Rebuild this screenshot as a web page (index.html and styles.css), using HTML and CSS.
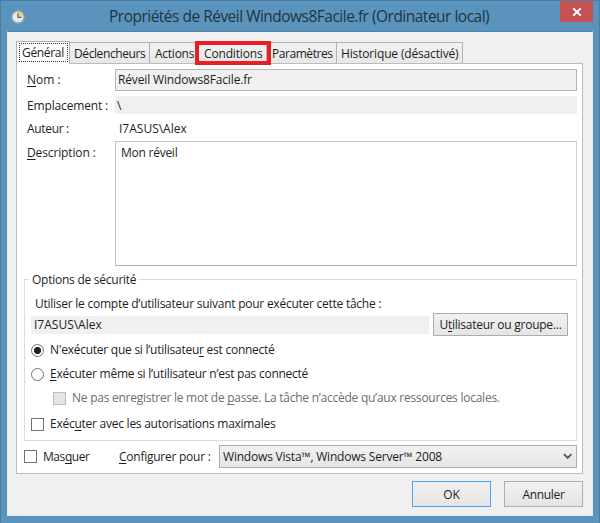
FILE: index.html
```
<!DOCTYPE html>
<html lang="fr">
<head>
<meta charset="utf-8">
<title>Propriétés de Réveil Windows8Facile.fr (Ordinateur local)</title>
<link rel="stylesheet" href="styles.css">
</head>
<body>
<div class="window">
  <header class="titlebar">
    <svg class="clock" width="14" height="14" viewBox="0 0 14 14">
      <circle cx="7" cy="7" r="6" fill="#e4e9eb" stroke="#a3a8aa" stroke-width="1.3"/>
      <path d="M7 1.5A5.5 5.5 0 0 1 12.5 7H7Z" fill="#f3cf86"/>
      <path d="M7 3v4.4h3.4" fill="none" stroke="#59666e" stroke-width="1.2"/>
    </svg>
    <h1 class="title">Propriétés de Réveil Windows8Facile.fr (Ordinateur local)</h1>
    <div class="close">
      <svg width="10" height="8" viewBox="0 0 10 8"><path d="M1.2 .3 8.8 7.7M8.8 .3 1.2 7.7" stroke="#fff" stroke-width="2"/></svg>
    </div>
  </header>
  <main class="client">
    <nav class="tabs">
      <div class="tab active"><span class="focus ls-tight">Général</span></div>
      <div class="tab t-trigger">Déclencheurs</div>
      <div class="tab t-actions">Actions</div>
      <div class="tab t-conditions">Conditions<i class="highlight"></i></div>
      <div class="tab t-settings">Paramètres</div>
      <div class="tab t-history">Historique (désactivé)</div>
    </nav>
    <section class="panel">
      <div class="row name"><label class="ls-none"><u>N</u>om :</label><div class="field boxed ls-wide">Réveil Windows8Facile.fr</div></div>
      <div class="row place"><label class="ls-wide">Emplacement :</label><div class="field">\</div></div>
      <div class="row author"><label class="ls-tight">Auteur :</label><div class="plain ls-none">I7ASUS\Alex</div></div>
      <div class="row desc"><label class="ls-desc"><u>D</u>escription :</label><div class="textarea">Mon réveil</div></div>
      <section class="group">
        <h2 class="legend">Options de sécurité</h2>
        <p class="intro">Utiliser le compte d’utilisateur suivant pour exécuter cette tâche :</p>
        <div class="account"><div class="user ls-none">I7ASUS\Alex</div><div class="button pick">U<u>t</u>ilisateur ou groupe...</div></div>
        <div class="option first"><i class="radio on"></i><span>N'exécuter que si l’utilisateu<u>r</u> est connecté</span></div>
        <div class="option second"><i class="radio"></i><span><u>E</u>xécuter même si l’utilisateur n’est pas connecté</span></div>
        <div class="option disabled"><i class="check"></i><span>Ne pas enregistrer le mot de <u>p</u>asse. La tâche n’accède qu’aux ressources locales.</span></div>
        <div class="option max"><i class="check"></i><span>Exéc<u>u</u>ter avec les autorisations maximales</span></div>
      </section>
      <div class="config">
        <i class="check"></i><span class="hide ls-hide">Mas<u>q</u>uer</span>
        <label class="for"><u>C</u>onfigurer pour :</label>
        <div class="select"><span>Windows Vista™, Windows Server™ 2008</span>
          <svg width="10" height="7" viewBox="0 0 10 7"><path d="M1 1.2 4.7 5 8.4 1.2" fill="none" stroke="#555" stroke-width="1.8"/></svg>
        </div>
      </div>
    </section>
    <footer class="actions">
      <div class="button ok">OK</div>
      <div class="button cancel ls-tight">Annuler</div>
    </footer>
  </main>
</div>
</body>
</html>
```
FILE: styles.css
```
* { box-sizing: border-box; }
body { margin: 0; font: 12px/16px "Open Sans", "Noto Sans", sans-serif; letter-spacing: -0.25px; color: #1e1e1e; white-space: nowrap; }
h1, h2, p { margin: 0; font-weight: 400; }
i { font-style: normal; display: block; flex: none; }
u { text-decoration-thickness: 1px; text-underline-offset: 1.5px; text-decoration-skip-ink: none; }
svg { display: block; flex: none; }

.ls-none { letter-spacing: 0; }
.ls-wide { letter-spacing: -0.15px; }
.ls-desc { letter-spacing: -0.13px; }
.ls-tight { letter-spacing: -0.32px; }
.ls-hide { letter-spacing: -0.43px; }

.window { width: 600px; height: 523px; background: #5a94bd; border: 1px solid #4b7da3; border-bottom: 0; padding: 0 6px 7px; display: flex; flex-direction: column; }
.titlebar { height: 30px; display: flex; flex: none; }
.clock { margin: 9px 0 0 4px; }
.title { margin-left: 84px; font-size: 15.5px; line-height: 30px; letter-spacing: -0.51px; color: #23343f; }
.close { margin: 0 0 0 auto; width: 33px; height: 21px; background: #c75050; display: flex; align-items: center; justify-content: center; }
.client { flex: 1; min-height: 0; background: #f0f0f0; border: 1px solid #e3e8eb; border-top-color: #4d83aa; padding: 9px 9px 0 8px; display: flex; flex-direction: column; }

.tabs { display: flex; height: 22px; align-items: flex-end; flex: none; }
.tab { height: 21px; border: 1px solid #b2b2b4; border-left-width: 0; border-bottom: 0; background: linear-gradient(#f1f1f1, #e7e7e7); line-height: 22px; padding-left: 4px; }
.tab.active { width: 54px; height: 23px; border-left-width: 1px; background: #fff; padding: 1px 1px 0 2px; position: relative; z-index: 1; margin-bottom: -1px; }
.focus { display: block; width: 49px; height: 19px; border: 1px dotted #333; line-height: 17px; padding-left: 2px; }
.t-trigger { width: 80px; letter-spacing: -0.4px; }
.t-actions { width: 47px; padding-left: 5px; }
.t-conditions { width: 70px; padding-left: 7px; letter-spacing: -0.165px; position: relative; }
.highlight { position: absolute; left: -2px; top: -2px; width: 76px; height: 24px; border: 4px solid #ed1c24; }
.t-settings { width: 70px; padding-left: 5px; letter-spacing: -0.445px; }
.t-history { width: 126px; letter-spacing: -0.155px; }

.panel { height: 411px; flex: none; background: #fff; border: 1px solid #bcbcbe; padding: 5px 5px 0 7px; display: flex; flex-direction: column; }
.row { display: flex; margin-left: 3px; flex: none; }
.row label { width: 88px; flex: none; }
.field { flex: 1; background: #f0f0f0; padding-left: 2px; }
.name { height: 22px; line-height: 22px; }
.boxed { border: 1px solid #b6b6b8; line-height: 20px; }
.place { height: 18px; margin-top: 5px; line-height: 20px; }
.author { height: 20px; margin-top: 4px; line-height: 22px; }
.plain { padding-left: 4px; }
.desc { height: 125px; margin-top: 3px; line-height: 24px; }
.textarea { flex: 1; border: 1px solid #c2c2c6; border-right-color: #d4d4d6; border-bottom-color: #b0b0b2; padding-left: 5px; line-height: 22px; }

.group { height: 162px; flex: none; margin-top: 13px; border: 1px solid #dcdcdc; padding: 0 8px 0 6px; display: flex; flex-direction: column; }
.legend { font-size: 12px; line-height: 16px; margin: -8px auto 0 -2px; padding: 0 3px; background: #fff; }
.intro { margin: 8px 0 0 4px; }
.account { display: flex; justify-content: space-between; margin-top: 1px; height: 24px; flex: none; }
.user { width: 398px; height: 18px; margin-top: 3px; background: #f0f0f0; padding-left: 3px; line-height: 18px; }
.button { border: 1px solid #adadad; background: linear-gradient(#f1f1f1, #e5e5e5); text-align: center; }
.pick { width: 135px; height: 23px; line-height: 22px; }
.option { display: flex; align-items: center; height: 16px; flex: none; }
.option span { margin-left: 6px; }
.radio { width: 13px; height: 13px; border: 1px solid #707070; border-radius: 50%; background: #fff; }
.on { background: radial-gradient(circle at center, #222 0 3.2px, #fff 3.9px); }
.check { width: 13px; height: 13px; border: 1px solid #707070; background: #fff; }
.first { margin-top: 5px; }
.second { margin-top: 8px; }
.disabled { margin: 8px 0 0 22px; color: #6d6d6d; }
.disabled .check { background: #e6e6e6; border-color: #bcbcbc; }
.max { margin-top: 10px; }

.config { display: flex; align-items: center; height: 23px; margin-top: 4px; flex: none; }
.hide { margin-left: 6px; width: 76px; flex: none; }
.for { width: 100px; flex: none; }
.select { flex: 1; height: 23px; border: 1px solid #adadad; background: linear-gradient(#f1f1f1, #e5e5e5); display: flex; align-items: center; justify-content: space-between; padding: 0 3px; letter-spacing: -0.2px; }

.actions { display: flex; justify-content: flex-end; gap: 13px; margin-top: 7px; }
.actions .button { width: 79px; height: 26px; line-height: 25px; }
.ok { border-color: #4ba3f2; letter-spacing: 0; }
```
